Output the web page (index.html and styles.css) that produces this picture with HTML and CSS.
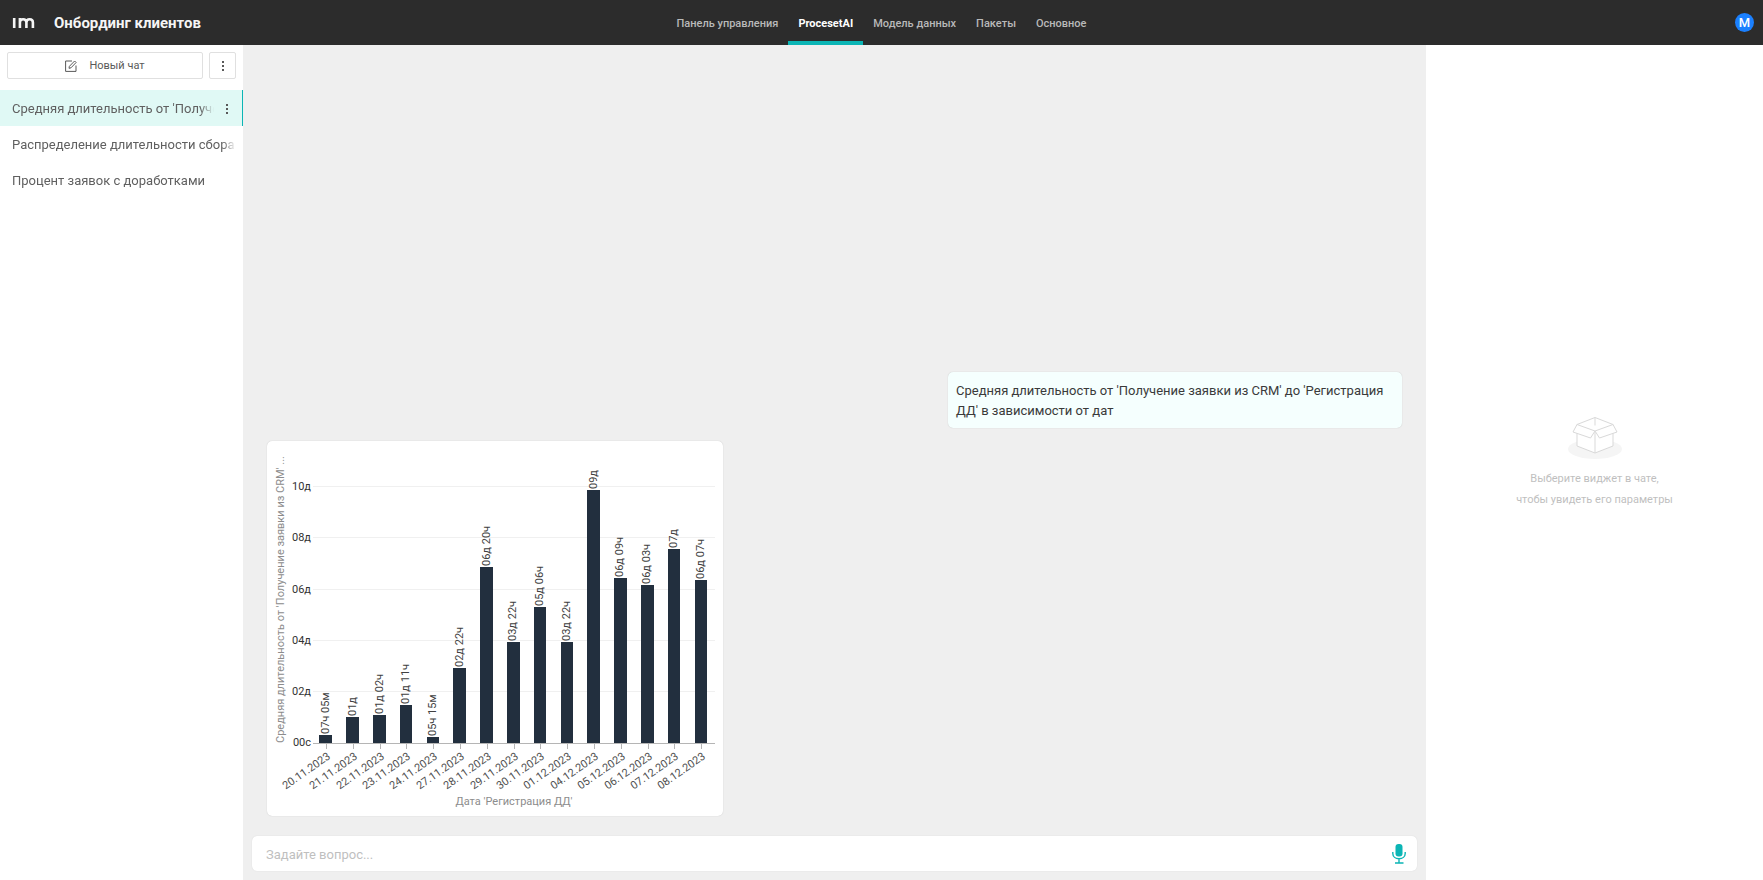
FILE: index.html
```html
<!DOCTYPE html>
<html lang="ru">
<head>
<meta charset="utf-8">
<title>Онбординг клиентов</title>
<link rel="stylesheet" href="styles.css">
</head>
<body>
<header class="header">
  <div class="brand">
    <svg class="logo" viewBox="0 0 22 12" role="img" aria-label="im">
      <path d="M1.7 1v10M7.4 11V1M7.4 11V5.4C7.4 3.4 8.6 2.2 10.600 2.200S13.900 3.400 13.900 5.400V11M13.900 5.400C13.900 3.400 15.200 2.200 17.100 2.200S20.400 3.400 20.400 5.400V11" fill="none" stroke="currentColor" stroke-width="2.6"/>
    </svg>
    <h1 class="title">Онбординг клиентов</h1>
  </div>
  <nav class="nav">
    <a class="nav-link" href="#">Панель управления</a>
    <a class="nav-link active" href="#" aria-current="page">ProcesetAI</a>
    <a class="nav-link" href="#">Модель данных</a>
    <a class="nav-link" href="#">Пакеты</a>
    <a class="nav-link" href="#">Основное</a>
  </nav>
  <button class="avatar" type="button" aria-label="Профиль">M</button>
</header>
<div class="layout">
  <aside class="sidebar">
    <div class="toolbar">
      <button class="btn new-chat" type="button">
        <svg class="edit-icon" viewBox="0 0 12 12" aria-hidden="true">
          <path d="M7 1H.6v10.400H11V5.500M4 8.300l.4-2L9.600 1l1.500 1.500L6 7.800z" fill="none" stroke="currentColor"/>
        </svg>
        Новый чат
      </button>
      <button class="btn more" type="button" aria-label="Меню">
        <svg class="dots" viewBox="0 0 2 12" aria-hidden="true"><path d="M0 1h2v2H0zM0 5h2v2H0zM0 9h2v2H0z" fill="currentColor"/></svg>
      </button>
    </div>
    <ul class="chats">
      <li class="chat active">
        <a class="chat-link" href="#">Средняя длительность от 'Получение заявки из CRM'</a>
        <button class="chat-more" type="button" aria-label="Действия">
          <svg class="dots" viewBox="0 0 2 12" aria-hidden="true"><path d="M0 1h2v2H0zM0 5h2v2H0zM0 9h2v2H0z" fill="currentColor"/></svg>
        </button>
      </li>
      <li class="chat"><a class="chat-link" href="#">Распределение длительности сбора документов</a></li>
      <li class="chat"><a class="chat-link" href="#">Процент заявок с доработками</a></li>
    </ul>
  </aside>
  <main class="main">
    <div class="messages">
      <p class="question">Средняя длительность от 'Получение заявки из CRM' до 'Регистрация ДД' в зависимости от дат</p>
      <div class="card">
        <svg class="chart" viewBox="0 0 456 375" role="img" aria-label="Средняя длительность по датам">
          <path class="grid" d="M46 45.500H448M46 96.500H448M46 148.500H448M46 199.500H448M46 250.500H448"/>
          <g class="y-labels">
            <text x="44" y="49">10д</text><text x="44" y="100">08д</text><text x="44" y="152">06д</text>
            <text x="44" y="203">04д</text><text x="44" y="254">02д</text><text x="44" y="305">00с</text>
          </g>
          <g class="bars">
            <rect x="52" y="294" width="13" height="8"/>
            <rect x="79" y="276" width="13" height="26"/>
            <rect x="106" y="274" width="13" height="28"/>
            <rect x="133" y="264" width="12" height="38"/>
            <rect x="160" y="296" width="12" height="6"/>
            <rect x="186" y="227" width="13" height="75"/>
            <rect x="213" y="126" width="13" height="176"/>
            <rect x="240" y="201" width="13" height="101"/>
            <rect x="267" y="166" width="12" height="136"/>
            <rect x="294" y="201" width="12" height="101"/>
            <rect x="320" y="49" width="13" height="253"/>
            <rect x="347" y="137" width="13" height="165"/>
            <rect x="374" y="144" width="13" height="158"/>
            <rect x="401" y="108" width="12" height="194"/>
            <rect x="428" y="139" width="12" height="163"/>
          </g>
          <path class="axis" d="M46 302.500H448M59.500 303v5M86.500 303v5M113.500 303v5M139.500 303v5M166.500 303v5M193.500 303v5M220.500 303v5M247.500 303v5M273.500 303v5M300.500 303v5M327.500 303v5M354.500 303v5M381.500 303v5M407.500 303v5M434.500 303v5"/>
          <g class="values">
            <text transform="translate(62 293) rotate(-90)">07ч 05м</text>
            <text transform="translate(89 275) rotate(-90)">01д</text>
            <text transform="translate(116 273) rotate(-90)">01д 02ч</text>
            <text transform="translate(142 263) rotate(-90)">01д 11ч</text>
            <text transform="translate(169 295) rotate(-90)">05ч 15м</text>
            <text transform="translate(196 226) rotate(-90)">02д 22ч</text>
            <text transform="translate(223 125) rotate(-90)">06д 20ч</text>
            <text transform="translate(249 200) rotate(-90)">03д 22ч</text>
            <text transform="translate(276 165) rotate(-90)">05д 06ч</text>
            <text transform="translate(303 200) rotate(-90)">03д 22ч</text>
            <text transform="translate(330 48) rotate(-90)">09д</text>
            <text transform="translate(356 136) rotate(-90)">06д 09ч</text>
            <text transform="translate(383 143) rotate(-90)">06д 03ч</text>
            <text transform="translate(410 107) rotate(-90)">07д</text>
            <text transform="translate(437 138) rotate(-90)">06д 07ч</text>
          </g>
          <g class="dates">
            <text transform="translate(64 317) rotate(-35)">20.11.2023</text>
            <text transform="translate(91 317) rotate(-35)">21.11.2023</text>
            <text transform="translate(118 317) rotate(-35)">22.11.2023</text>
            <text transform="translate(144 317) rotate(-35)">23.11.2023</text>
            <text transform="translate(171 317) rotate(-35)">24.11.2023</text>
            <text transform="translate(198 317) rotate(-35)">27.11.2023</text>
            <text transform="translate(225 317) rotate(-35)">28.11.2023</text>
            <text transform="translate(252 317) rotate(-35)">29.11.2023</text>
            <text transform="translate(278 317) rotate(-35)">30.11.2023</text>
            <text transform="translate(305 317) rotate(-35)">01.12.2023</text>
            <text transform="translate(332 317) rotate(-35)">04.12.2023</text>
            <text transform="translate(359 317) rotate(-35)">05.12.2023</text>
            <text transform="translate(386 317) rotate(-35)">06.12.2023</text>
            <text transform="translate(412 317) rotate(-35)">07.12.2023</text>
            <text transform="translate(439 317) rotate(-35)">08.12.2023</text>
          </g>
          <text class="axis-title" transform="translate(17 302) rotate(-90)">Средняя длительность от 'Получение заявки из CRM' ...</text>
          <text class="axis-title middle" x="247" y="364">Дата 'Регистрация ДД'</text>
        </svg>
      </div>
    </div>
    <form class="ask">
      <input class="ask-input" type="text" placeholder="Задайте вопрос..." aria-label="Вопрос">
      <button class="mic" type="button" aria-label="Голосовой ввод">
        <svg class="mic-icon" viewBox="0 0 14 20" aria-hidden="true">
          <rect x="3.500" y="0" width="7" height="12.500" rx="3" fill="currentColor"/>
          <path d="M.8 8v1.500C.8 12.700 3.500 14.700 7 14.700S13.200 12.700 13.200 9.500V8M7 14.700V19M3 19h8.500" fill="none" stroke="currentColor" stroke-width="1.400"/>
        </svg>
      </button>
    </form>
  </main>
  <aside class="params">
    <svg class="box" viewBox="0 0 56 44" aria-hidden="true">
      <ellipse cx="28" cy="33" rx="27" ry="10" fill="#f5f5f5"/>
      <g fill="#fff" stroke="#d9d9d9" stroke-linejoin="round">
        <path d="M10 8.500 28 1.500l18 7V30L28 37 10 30z"/>
        <path d="M28 15v22M28 1.500v8" fill="none"/>
        <path d="M10 8.500 28 15l-4.500 7L6 16z"/>
        <path d="M46 8.500 28 15l4.500 7L50 16z"/>
      </g>
    </svg>
    <p class="hint">Выберите виджет в чате,<br>чтобы увидеть его параметры</p>
  </aside>
</div>
</body>
</html>
```
FILE: styles.css
```css
* { box-sizing: border-box; }

body {
  margin: 0;
  height: 100vh;
  display: flex;
  flex-direction: column;
  font-family: Roboto, "Liberation Sans", sans-serif;
  font-size: 13px;
  color: #3a3a3a;
  background: #fff;
}

button, input { font: inherit; color: inherit; }
button { padding: 0; border: 0; background: none; cursor: pointer; }
a { color: inherit; text-decoration: none; }

.header {
  display: grid;
  grid-template-columns: 1fr auto 1fr;
  height: 45px;
  flex: none;
  background: #2c2c2c;
}
.brand { display: flex; align-items: center; gap: 19px; padding-left: 12px; color: #f5f5f5; }
.logo { width: 23px; height: 12px; }
.title { margin: 0; font-size: 15px; font-weight: 700; }
.nav { display: flex; }
.nav-link {
  display: flex;
  align-items: center;
  padding: 5px 10px 0;
  border-bottom: 4px solid transparent;
  font-size: 11px;
  font-weight: 500;
  color: #b9b9b9;
}
.nav-link.active { color: #fff; font-weight: 700; border-color: #0bb5b5; }
.avatar {
  align-self: center;
  justify-self: end;
  width: 19px;
  height: 19px;
  margin-right: 9px;
  border-radius: 50%;
  background: #1b80ff;
  color: #fff;
  font-weight: 500;
  line-height: 19px;
}

.layout {
  flex: 1;
  min-height: 0;
  display: grid;
  grid-template-columns: 243px minmax(0, 1fr) 337px;
}

.toolbar { display: flex; gap: 6px; padding: 7px 7px 11px; }
.btn {
  display: flex;
  align-items: center;
  justify-content: center;
  height: 27px;
  border: 1px solid #e0e0e0;
  border-radius: 2px;
  font-size: 11px;
  color: #595959;
}
.new-chat { flex: 1; gap: 12px; }
.more { width: 27px; }
.edit-icon { width: 12px; height: 12px; }
.dots { width: 2px; height: 12px; }

.chats { margin: 0; padding: 0; list-style: none; }
.chat {
  display: flex;
  align-items: center;
  height: 36px;
  padding: 1px 7px 0 12px;
  color: #606060;
}
.chat.active { padding-right: 4px; background: #e0f9f5; border-right: 1px solid #0bb5b5; }
.chat-link {
  flex: 1;
  overflow: hidden;
  white-space: nowrap;
  line-height: 20px;
  mask-image: linear-gradient(to left, transparent, #000 14px);
}
.chat-more { display: flex; justify-content: center; width: 22px; margin-left: 2px; color: #595959; }

.main { display: flex; flex-direction: column; background: #efefef; }
.messages {
  flex: 1;
  min-height: 0;
  display: flex;
  flex-direction: column;
  justify-content: flex-end;
  gap: 13px;
  padding: 0 24px 20px;
}
.question {
  align-self: flex-end;
  width: 40%;
  max-width: 454px;
  margin: 0;
  padding: 9px 8px 7px;
  border-radius: 5px;
  background: #f5fffe;
  box-shadow: 0 0 1px #bbb;
  line-height: 20px;
}
.card {
  width: 40%;
  min-width: 456px;
  max-width: 456px;
  border-radius: 5px;
  background: #fff;
  box-shadow: 0 0 1px #bbb;
}

.chart { display: block; width: 100%; font-size: 11px; }
.grid { fill: none; stroke: #f0f0f0; }
.axis { fill: none; stroke: #b5b5b5; }
.bars { fill: #222f3e; }
.y-labels { fill: #333; text-anchor: end; }
.values { fill: #404040; }
.dates { fill: #505050; text-anchor: end; }
.axis-title { fill: #8c8c8c; }
.middle { text-anchor: middle; }

.ask {
  display: flex;
  align-items: center;
  height: 35px;
  margin: 0 9px 9px;
  padding: 1px 11px 0 14px;
  border-radius: 5px;
  background: #fff;
  box-shadow: 0 0 1px #ccc;
}
.ask-input { flex: 1; border: 0; padding: 0; outline: 0; background: none; }
.ask-input::placeholder { color: #bfbfbf; }
.mic { display: flex; color: #0bb5b5; }
.mic-icon { width: 14px; height: 20px; }

.params {
  display: flex;
  flex-direction: column;
  align-items: center;
  justify-content: center;
  gap: 8px;
}
.box { width: 56px; height: 44px; }
.hint { margin: 0; font-size: 11px; line-height: 21px; text-align: center; color: #bfbfbf; }
```
